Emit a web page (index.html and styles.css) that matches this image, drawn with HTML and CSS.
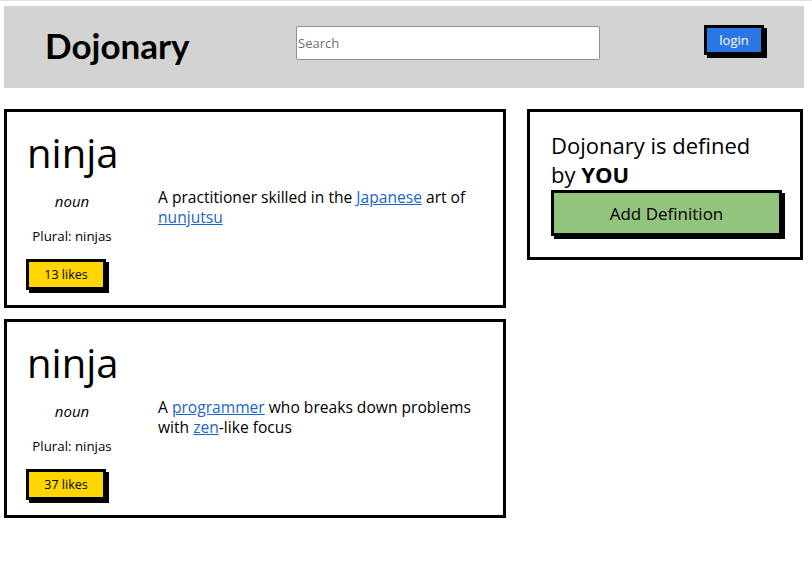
FILE: index.html
```html
<!DOCTYPE html>
<html>
<head>
<meta charset="utf-8">
<link rel="stylesheet" href="styles.css">
</head>
<body>
<header class="topbar">
  <h1 class="brand">Dojonary</h1>
  <input class="search" type="text" placeholder="Search">
  <button class="btn btn-login">login</button>
</header>
<div class="layout">
  <main class="entries">
    <section class="card entry">
      <h2 class="word">ninja</h2>
      <div class="entry-body">
        <div class="meta">
          <p class="pos">noun</p>
          <p class="plural">Plural: ninjas</p>
          <button class="btn btn-likes">13 likes</button>
        </div>
        <p class="definition">A practitioner skilled in the <a href="#">Japanese</a> art of <a href="#">nunjutsu</a></p>
      </div>
    </section>
    <section class="card entry">
      <h2 class="word">ninja</h2>
      <div class="entry-body">
        <div class="meta">
          <p class="pos">noun</p>
          <p class="plural">Plural: ninjas</p>
          <button class="btn btn-likes">37 likes</button>
        </div>
        <p class="definition">A <a href="#">programmer</a> who breaks down problems with <a href="#">zen</a>-like focus</p>
      </div>
    </section>
  </main>
  <aside class="card side">
    <p class="tagline">Dojonary is defined by <strong>YOU</strong></p>
    <button class="btn btn-add">Add Definition</button>
  </aside>
</div>
</body>
</html>
```
FILE: styles.css
```css
html {
  border-top: 1px solid #e2e2e2;
}
body {
  margin: 5px 8px 4px 4px;
  font-family: "Open Sans", "Liberation Sans", sans-serif;
  color: #000;
}
.topbar {
  background: #d3d3d3;
  height: 82px;
  display: flex;
  align-items: center;
  padding: 0 40px 0 41px;
}
.brand {
  margin: 0;
  font-family: Lato, "Open Sans", sans-serif;
  font-size: 35px;
  font-weight: 700;
  width: 251px;
  margin-top: -4px;
}
.search {
  box-sizing: border-box;
  width: 304px;
  height: 34px;
  border: 1px solid #8f8f9d;
  border-radius: 2px;
  padding: 0 1px;
  font-family: "Open Sans", sans-serif;
  font-size: 13px;
  margin-top: -8px;
}
.search::placeholder {
  color: #6f6f6f;
}
.btn {
  border: 3px solid #000;
  box-shadow: 3px 3px 0 #000;
  font-family: "Open Sans", "Liberation Sans", sans-serif;
  color: #000;
  cursor: pointer;
  padding: 0;
}
.btn-login {
  margin-left: auto;
  margin-top: -14px;
  background: #2a76e3;
  color: #fff;
  width: 60px;
  height: 30px;
  font-size: 13px;
}
.layout {
  display: flex;
  align-items: flex-start;
  gap: 21px;
  margin-top: 21px;
}
.entries {
  width: 502px;
  display: flex;
  flex-direction: column;
  gap: 11px;
}
.card {
  border: 3px solid #000;
  box-sizing: border-box;
}
.entry {
  height: 199px;
  padding: 16px 20px 0 20px;
}
.word {
  margin: 0;
  font-size: 40px;
  font-weight: 400;
  line-height: 50px;
  height: 50px;
}
.entry-body {
  display: flex;
  gap: 41px;
  margin-top: 13px;
}
.meta {
  width: 90px;
  flex: none;
  text-align: center;
}
.pos {
  margin: 0;
  font-style: italic;
  font-size: 15px;
  line-height: 20px;
}
.plural {
  margin: 16px 0 0;
  font-size: 13.3px;
  line-height: 18px;
}
.btn-likes {
  display: block;
  margin-top: 14px;
  margin-left: -1px;
  width: 80px;
  height: 31px;
  background: #ffd600;
  font-size: 12.5px;
}
.definition {
  margin: -4px 0 0;
  font-size: 15.6px;
  line-height: 20px;
  width: 320px;
}
.definition a {
  color: #1a66cc;
}
.side {
  width: 276px;
  height: 151px;
  padding: 19px 21px 0 21px;
}
.tagline {
  margin: 0;
  font-size: 22px;
  line-height: 29px;
}
.tagline strong {
  font-weight: 700;
}
.btn-add {
  display: block;
  width: 231px;
  height: 46px;
  background: #93c47d;
  font-size: 17px;
  margin-top: 1px;
}
```
